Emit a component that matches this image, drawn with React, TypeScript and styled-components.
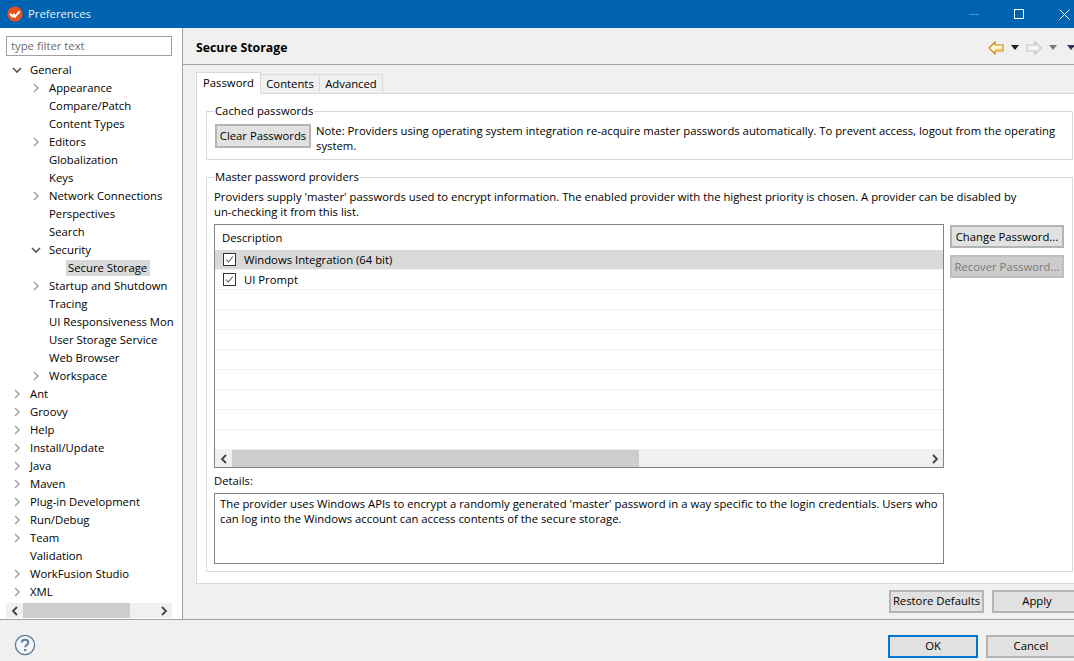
import styled, { createGlobalStyle } from 'styled-components';

const treeItems = [
    { label: 'General', level: 0, arrow: 'open' },
    { label: 'Appearance', level: 1, arrow: 'closed' },
    { label: 'Compare/Patch', level: 1 },
    { label: 'Content Types', level: 1 },
    { label: 'Editors', level: 1, arrow: 'closed' },
    { label: 'Globalization', level: 1 },
    { label: 'Keys', level: 1 },
    { label: 'Network Connections', level: 1, arrow: 'closed' },
    { label: 'Perspectives', level: 1 },
    { label: 'Search', level: 1 },
    { label: 'Security', level: 1, arrow: 'open' },
    { label: 'Secure Storage', level: 2, selected: true },
    { label: 'Startup and Shutdown', level: 1, arrow: 'closed' },
    { label: 'Tracing', level: 1 },
    { label: 'UI Responsiveness Mon', level: 1 },
    { label: 'User Storage Service', level: 1 },
    { label: 'Web Browser', level: 1 },
    { label: 'Workspace', level: 1, arrow: 'closed' },
    { label: 'Ant', level: 0, arrow: 'closed' },
    { label: 'Groovy', level: 0, arrow: 'closed' },
    { label: 'Help', level: 0, arrow: 'closed' },
    { label: 'Install/Update', level: 0, arrow: 'closed' },
    { label: 'Java', level: 0, arrow: 'closed' },
    { label: 'Maven', level: 0, arrow: 'closed' },
    { label: 'Plug-in Development', level: 0, arrow: 'closed' },
    { label: 'Run/Debug', level: 0, arrow: 'closed' },
    { label: 'Team', level: 0, arrow: 'closed' },
    { label: 'Validation', level: 0 },
    { label: 'WorkFusion Studio', level: 0, arrow: 'closed' },
    { label: 'XML', level: 0, arrow: 'closed' },
];

const GlobalStyle = createGlobalStyle`
    html, body {
        margin: 0;
        padding: 0;
        overflow: hidden;
    }
    body {
        font-family: "Open Sans", "Noto Sans", sans-serif;
        font-size: 11.3px;
        color: #000;
        background: #f0f0f0;
    }
    * {
        box-sizing: border-box;
    }
`;

const TreeArrow = ({ open }: { open: boolean }) => (
    <svg width="10" height="10" viewBox="0 0 10 10">
        {open ? (
            <path d="M1 3 L5 7 L9 3" fill="none" stroke="#555" strokeWidth="1.6" />
        ) : (
            <path d="M3 1 L7 5 L3 9" fill="none" stroke="#a6a6a6" strokeWidth="1.6" />
        )}
    </svg>
);

const ScrollChevron = ({ left }: { left?: boolean }) => (
    <svg width="8" height="10" viewBox="0 0 8 10">
        <path d={left ? 'M6 1 L2 5 L6 9' : 'M2 1 L6 5 L2 9'} fill="none" stroke="#444" strokeWidth="1.8" />
    </svg>
);

const Logo = () => (
    <svg width="16" height="16" viewBox="0 0 16 16">
        <circle cx="8" cy="8" r="7.6" fill="#e8501e" />
        <path d="M3 7.6 L5.4 10.4 L7.6 7.8 M6.8 9.8 L7.8 10.8 L12.8 5.4" fill="none" stroke="#fff" strokeWidth="2" />
    </svg>
);

const NavArrow = ({ back }: { back?: boolean }) => (
    <svg width="16" height="14" viewBox="0 0 16 14">
        {back ? (
            <>
                <path d="M1 7 L7 1 L7 4 L15 4 L15 10 L7 10 L7 13 Z" fill="#fff6d2" stroke="#c58a1e" strokeWidth="1.2" />
                <path d="M7.5 7.8 H14.3 V9.4 H7.5 Z" fill="#f6c568" />
            </>
        ) : (
            <path d="M15 7 L9 1 L9 4 L1 4 L1 10 L9 10 L9 13 Z" fill="#f4f4f4" stroke="#c4c4c4" strokeWidth="1.2" />
        )}
    </svg>
);

const DropCaret = ({ color }: { color: string }) => (
    <svg width="8" height="5" viewBox="0 0 8 5">
        <path d="M0 0 H8 L4 5 Z" fill={color} />
    </svg>
);

const CheckMark = () => (
    <svg width="13" height="13" viewBox="0 0 13 13">
        <path d="M2.5 6.5 L5.2 9.5 L10.5 3" fill="none" stroke="#555" strokeWidth="1.2" />
    </svg>
);

const HelpIcon = () => (
    <svg width="22" height="22" viewBox="0 0 22 22">
        <circle cx="11" cy="11" r="9.6" fill="#f4f6f9" stroke="#5f7f9f" strokeWidth="1.4" />
        <path d="M7.8 8.4 C7.8 4.8 14.4 4.8 14.4 8.4 C14.4 10.6 11.2 10.6 11.2 13.2" fill="none" stroke="#5f7f9f" strokeWidth="2" />
        <circle cx="11.2" cy="16" r="1.3" fill="#5f7f9f" />
    </svg>
);

const App = () => {
    return (
        <Window>
            <GlobalStyle />
            <TitleBar>
                <TitleLeft>
                    <Logo />
                    <TitleText>Preferences</TitleText>
                </TitleLeft>
                <WindowControls>
                    <MinimizeIcon />
                    <MaximizeIcon />
                    <svg width="11" height="11" viewBox="0 0 11 11">
                        <path d="M0.5 0.5 L10.5 10.5 M10.5 0.5 L0.5 10.5" stroke="#fff" strokeWidth="1" />
                    </svg>
                </WindowControls>
            </TitleBar>

            <Main>
                <Sidebar>
                    <FilterInput readOnly placeholder="type filter text" />
                    <Tree>
                        {treeItems.map((item) => (
                            <TreeRow key={item.label} $level={item.level}>
                                <ArrowSlot>
                                    {item.arrow && <TreeArrow open={item.arrow === 'open'} />}
                                </ArrowSlot>
                                <TreeLabel $selected={item.selected}>{item.label}</TreeLabel>
                            </TreeRow>
                        ))}
                    </Tree>
                    <SideScroll>
                        <ScrollEnd>
                            <ScrollChevron left />
                        </ScrollEnd>
                        <SideThumb />
                        <ScrollEnd>
                            <ScrollChevron />
                        </ScrollEnd>
                    </SideScroll>
                </Sidebar>

                <Content>
                    <Header>
                        <PageTitle>Secure Storage</PageTitle>
                        <NavIcons>
                            <NavArrow back />
                            <DropCaret color="#222" />
                            <NavArrow />
                            <DropCaret color="#777" />
                            <MenuCaret>
                                <DropCaret color="#3b2a5c" />
                            </MenuCaret>
                        </NavIcons>
                    </Header>

                    <Tabs>
                        <Tab $active $width={65}>Password</Tab>
                        <Tab $width={59}>Contents</Tab>
                        <Tab $width={63}>Advanced</Tab>
                    </Tabs>

                    <Panel>
                        <CachedGroup>
                            <GroupLegend>Cached passwords</GroupLegend>
                            <CachedRow>
                                <ClearButton>Clear Passwords</ClearButton>
                                <Note>
                                    Note: Providers using operating system integration re-acquire master passwords automatically. To prevent access, logout from the operating system.
                                </Note>
                            </CachedRow>
                        </CachedGroup>

                        <MasterGroup>
                            <GroupLegend>Master password providers</GroupLegend>
                            <Intro>
                                Providers supply 'master' passwords used to encrypt information. The enabled provider with the highest priority is chosen. A provider can be disabled by un-checking it from this list.
                            </Intro>
                            <TableRow>
                                <Table>
                                    <TableHead>Description</TableHead>
                                    <ProviderRow $selected>
                                        <CheckBox><CheckMark /></CheckBox>
                                        Windows Integration (64 bit)
                                    </ProviderRow>
                                    <ProviderRow>
                                        <CheckBox><CheckMark /></CheckBox>
                                        UI Prompt
                                    </ProviderRow>
                                    {Array.from({ length: 8 }).map((_, i) => (
                                        <ProviderRow key={i} />
                                    ))}
                                    <TableScroll>
                                        <ScrollEnd>
                                            <ScrollChevron left />
                                        </ScrollEnd>
                                        <TableTrack>
                                            <TableThumb />
                                        </TableTrack>
                                        <ScrollEnd>
                                            <ScrollChevron />
                                        </ScrollEnd>
                                    </TableScroll>
                                </Table>
                                <SideButtons>
                                    <ActionButton>Change Password...</ActionButton>
                                    <ActionButton disabled>Recover Password...</ActionButton>
                                </SideButtons>
                            </TableRow>
                            <DetailsLabel>Details:</DetailsLabel>
                            <DetailsBox>
                                The provider uses Windows APIs to encrypt a randomly generated 'master' password in a way specific to the login credentials. Users who can log into the Windows account can access contents of the secure storage.
                            </DetailsBox>
                        </MasterGroup>
                    </Panel>

                    <PageActions>
                        <RestoreButton>Restore Defaults</RestoreButton>
                        <WideButton>Apply</WideButton>
                    </PageActions>
                </Content>
            </Main>

            <Footer>
                <HelpIcon />
                <FooterButtons>
                    <WideButton $primary>OK</WideButton>
                    <WideButton>Cancel</WideButton>
                </FooterButtons>
            </Footer>
        </Window>
    );
};

const Window = styled.div`
    width: 1074px;
    height: 661px;
    overflow: hidden;
    display: flex;
    flex-direction: column;
    background: #f0f0f0;
`;

const TitleBar = styled.div`
    height: 28px;
    flex-shrink: 0;
    background: #0063b1;
    display: flex;
    align-items: center;
    justify-content: space-between;
    padding: 0 4px 0 7px;
    color: #fff;
`;

const TitleLeft = styled.div`
    display: flex;
    align-items: center;
    gap: 5px;
`;

const TitleText = styled.span`
    color: #e8f1f8;
    padding-bottom: 2px;
`;

const WindowControls = styled.div`
    display: flex;
    align-items: center;
    gap: 35px;
`;

const MinimizeIcon = styled.div`
    width: 10px;
    height: 1px;
    background: #4a8fc8;
`;

const MaximizeIcon = styled.div`
    width: 10px;
    height: 10px;
    border: 1px solid #fff;
`;

const Main = styled.div`
    height: 592px;
    flex-shrink: 0;
    display: flex;
    border-bottom: 1px solid #a0a0a0;
`;

const Sidebar = styled.div`
    width: 183px;
    flex-shrink: 0;
    background: #fff;
    border-right: 1px solid #a0a0a0;
    padding: 8px 10px 0 6px;
    display: flex;
    flex-direction: column;
`;

const FilterInput = styled.input`
    width: 166px;
    height: 20px;
    flex-shrink: 0;
    border: 1px solid #a0a0a0;
    padding: 0 4px 2px;
    font: inherit;
    outline: none;
    &::placeholder {
        color: #6d6d6d;
        opacity: 1;
    }
`;

const Tree = styled.div`
    margin-top: 5px;
    width: 166px;
`;

const TreeRow = styled.div<{ $level: number }>`
    height: 18px;
    display: flex;
    align-items: center;
    white-space: nowrap;
    padding-left: ${({ $level }) => $level * 19 + 6}px;
`;

const ArrowSlot = styled.span`
    width: 18px;
    flex-shrink: 0;
    display: flex;
    align-items: center;
`;

const TreeLabel = styled.span<{ $selected?: boolean }>`
    background: ${({ $selected }) => ($selected ? '#d9d9d9' : 'transparent')};
    margin-left: ${({ $selected }) => ($selected ? '-2px' : '0')};
    padding: ${({ $selected }) => ($selected ? '0 3px 0 2px' : '0')};
    line-height: 16px;
`;

const SideScroll = styled.div`
    width: 166px;
    height: 15px;
    margin-top: 2px;
    background: #f0f0f0;
    display: flex;
    align-items: center;
    justify-content: space-between;
`;

const ScrollEnd = styled.span`
    width: 17px;
    height: 100%;
    flex-shrink: 0;
    display: flex;
    align-items: center;
    justify-content: center;
`;

const SideThumb = styled.div`
    width: 107px;
    height: 100%;
    background: #cdcdcd;
    margin-right: auto;
`;

const Content = styled.div`
    flex: 1;
    min-width: 0;
    padding-left: 13px;
    display: flex;
    flex-direction: column;
`;

const Header = styled.div`
    height: 37px;
    flex-shrink: 0;
    margin-left: -13px;
    padding: 3px 0 0 13px;
    border-bottom: 1px solid #a0a0a0;
    display: flex;
    align-items: center;
    justify-content: space-between;
`;

const PageTitle = styled.h1`
    margin: 0;
    font-size: 12.3px;
    font-weight: 700;
`;

const NavIcons = styled.div`
    display: flex;
    align-items: center;
    gap: 7px;
    margin-right: -1px;
`;

const MenuCaret = styled.span`
    display: flex;
    margin-left: 3px;
`;

const Tabs = styled.div`
    display: flex;
    margin-top: 7px;
    height: 22px;
    flex-shrink: 0;
    position: relative;
    z-index: 1;
`;

const Tab = styled.div<{ $active?: boolean; $width: number }>`
    width: ${({ $width }) => $width}px;
    height: ${({ $active }) => ($active ? '22px' : '20px')};
    margin-top: ${({ $active }) => ($active ? '0' : '2px')};
    padding-bottom: ${({ $active }) => ($active ? '3px' : '2px')};
    display: flex;
    align-items: center;
    justify-content: center;
    background: ${({ $active }) => ($active ? '#fff' : '#f0f0f0')};
    border: 1px solid #d9d9d9;
    border-bottom: ${({ $active }) => ($active ? 'none' : '1px solid #d9d9d9')};
    border-left: ${({ $active }) => ($active ? '1px solid #d9d9d9' : 'none')};
`;

const Panel = styled.div`
    height: 491px;
    margin-top: -1px;
    margin-right: -11px;
    flex-shrink: 0;
    background: #fff;
    border: 1px solid #d9d9d9;
    padding: 9px 11px 0 9px;
    display: flex;
    flex-direction: column;
    gap: 9px;
`;

const Group = styled.fieldset`
    margin: 0;
    padding: 0 7px;
    min-width: 0;
    border: 1px solid #d9d9d9;
`;

const CachedGroup = styled(Group)`
    height: 57px;
    flex-shrink: 0;
`;

const MasterGroup = styled(Group)`
    height: 403px;
    flex-shrink: 0;
`;

const GroupLegend = styled.legend`
    padding: 0 1px;
    margin-left: 0;
    line-height: 16px;
`;

const CachedRow = styled.div`
    display: flex;
    align-items: flex-start;
    gap: 5px;
    margin: 5px 0 0 1px;
`;

const Note = styled.div`
    line-height: 15px;
    margin-top: -1px;
    width: 745px;
`;

const Button = styled.button`
    font: inherit;
    color: #000;
    background: #e1e1e1;
    border: 2px solid #b4b4b4;
    padding: 0 0 2px;
    flex-shrink: 0;
    white-space: nowrap;
`;

const ClearButton = styled(Button)`
    width: 96px;
    height: 24px;
`;

const Intro = styled.div`
    line-height: 15px;
    margin-top: 4px;
    width: 820px;
`;

const TableRow = styled.div`
    display: flex;
    gap: 6px;
    margin-top: 5px;
`;

const Table = styled.div`
    width: 730px;
    height: 244px;
    flex-shrink: 0;
    border: 1px solid #828282;
    background: #fff;
    display: flex;
    flex-direction: column;
`;

const TableHead = styled.div`
    height: 25px;
    flex-shrink: 0;
    display: flex;
    align-items: center;
    padding: 0 7px 1px;
`;

const ProviderRow = styled.div<{ $selected?: boolean }>`
    height: 20px;
    flex-shrink: 0;
    display: flex;
    align-items: center;
    gap: 8px;
    padding-left: 8px;
    background: ${({ $selected }) => ($selected ? '#d9d9d9' : '#fff')};
    border-bottom: 1px solid #f0f0f0;
`;

const CheckBox = styled.span`
    width: 13px;
    height: 13px;
    flex-shrink: 0;
    background: #fff;
    border: 1px solid #333;
    display: flex;
    align-items: center;
    justify-content: center;
`;

const TableScroll = styled.div`
    height: 17px;
    margin-top: auto;
    background: #f0f0f0;
    display: flex;
    align-items: center;
`;

const TableTrack = styled.div`
    flex: 1;
    height: 100%;
`;

const TableThumb = styled.div`
    width: 407px;
    height: 100%;
    background: #cdcdcd;
`;

const SideButtons = styled.div`
    display: flex;
    flex-direction: column;
    gap: 7px;
    padding-top: 1px;
`;

const ActionButton = styled(Button)`
    width: 114px;
    height: 23px;
    padding: 0;
    &:disabled {
        background: #cccccc;
        border-color: #bfbfbf;
        color: #7a7a7a;
    }
`;

const DetailsLabel = styled.div`
    margin-top: 5px;
    line-height: 16px;
`;

const DetailsBox = styled.div`
    width: 730px;
    height: 71px;
    margin-top: 4px;
    padding: 2px 5px;
    line-height: 15px;
    background: #fff;
    border: 1px solid #828282;
`;

const PageActions = styled.div`
    display: flex;
    justify-content: flex-end;
    gap: 8px;
    margin-top: 6px;
    margin-right: -8px;
`;

const WideButton = styled(Button)<{ $primary?: boolean }>`
    width: 90px;
    height: 23px;
    border-color: ${({ $primary }) => ($primary ? '#0078d7' : '#b4b4b4')};
`;

const RestoreButton = styled(Button)`
    width: 95px;
    height: 23px;
    margin-left: -1px;
`;

const Footer = styled.div`
    flex: 1;
    display: flex;
    align-items: flex-start;
    justify-content: space-between;
    padding: 14px 0 0 14px;
`;

const FooterButtons = styled.div`
    display: flex;
    gap: 8px;
    margin-right: -2px;
    margin-top: 1px;
`;

export default App;
